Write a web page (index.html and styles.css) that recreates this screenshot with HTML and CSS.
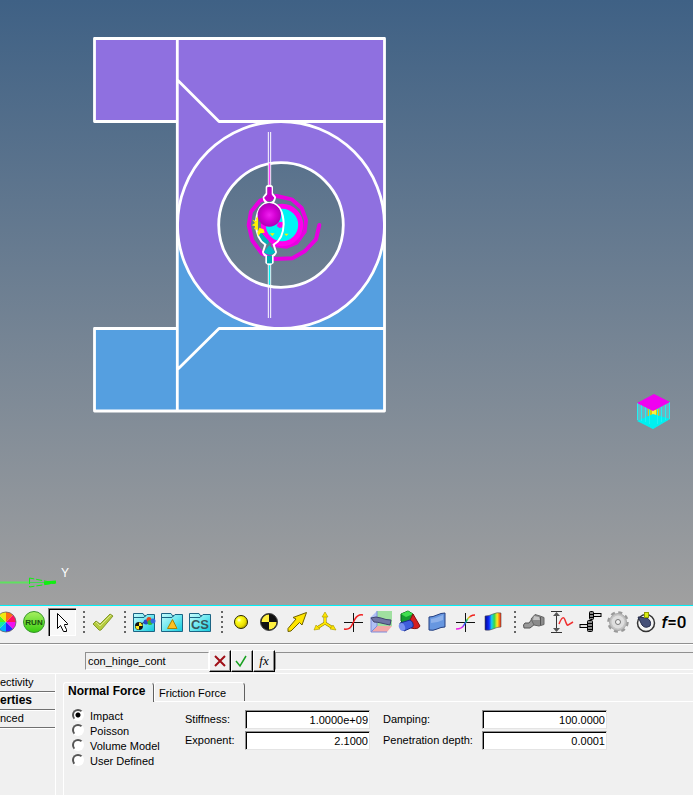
FILE: index.html
```
<!DOCTYPE html>
<html lang="en">
<head>
    <meta charset="UTF-8">
    <meta name="viewport" content="width=device-width, initial-scale=1.0">
    <title>con_hinge_cont</title>
    <link rel="stylesheet" href="styles.css">
</head>
<body>
    <main class="scene">
        <svg class="model" viewBox="0 0 693 605">
            <defs>
                <radialGradient id="ball" cx="50%" cy="50%" r="55%">
                    <stop offset="0" stop-color="#f020f0"/>
                    <stop offset=".5" stop-color="#d400d4"/>
                    <stop offset="1" stop-color="#a800b0"/>
                </radialGradient>
            </defs>
            <!-- hinge halves -->
            <path fill="#8f70e0" d="M94 38H384V225H343A62 62 0 0 0 219 225H177V121H94Z"/>
            <path fill="#559fe0" d="M177 225H219A62 62 0 0 0 343 225H384V411H94V328H177Z"/>
            <path fill="#8f70e0" fill-rule="evenodd" d="M178 225a103 103 0 0 1 206 0a103 103 0 0 1 -206 0ZM219 225a62 62 0 0 0 124 0a62 62 0 0 0 -124 0Z"/>
            <g fill="none" stroke="#fff" stroke-width="2.8" stroke-linejoin="round">
                <path d="M177 121.500H94.500V38.500H384.500V411H94.500V328.500H177M177.300 38V411M177.500 80L219 121.500H384M177.500 369.500L219 328.500H384"/>
                <circle cx="281" cy="225" r="103.500"/>
                <circle cx="281" cy="225" r="62.300"/>
            </g>
            <!-- joint, spring and contact graphics -->
            <g transform="translate(215 120) scale(.33333)">
                <path d="M313 315L303 358L270 393L232 415L180 417L140 400L112 362L101 315L108 275L135 242L185 228L230 238L260 264L273 300L269 335L245 368L215 380L175 375" fill="none" stroke="#e800e0" stroke-width="12" stroke-linecap="round" stroke-linejoin="round"/>
                <circle cx="201" cy="315" r="56" fill="#00f4f4" stroke="#f0e" stroke-width="15"/>
                <path d="M160 36V200M167 36V200M160 430V594M167 430V594" stroke="#fff" stroke-width="3"/>
                <path d="M163.500 130V200" stroke="#ff40ff" stroke-width="4"/>
                <path d="M163.500 430V494" stroke="#00f0f0" stroke-width="4"/>
                <path d="M165 340h14l-7 8ZM208 341h13l-7 7Z" fill="#fff200"/>
                <path d="M190 307l15-2 3 16-15 3-8-6Z" fill="#f0e"/>
                <path d="M125 335Q132 362 158 374L162 364L140 340Z" fill="#00b4b8"/>
                <path d="M155 202q0-5 8-5t8 5V220L180 232Q178 246 170 248Q205 258 206 312Q205 358 176 374L183 396Q181 404 173 408V428Q163 438 154 428V408Q145 404 144 396L151 374Q124 358 123 312Q124 258 156 248Q147 244 146 232L155 220Z" fill="none" stroke="#fff" stroke-width="6"/>
                <path d="M157 202h13v22l8 10q-14 20-31 0l10-10Z" fill="#c400c8"/>
                <path d="M163 376L181 397Q164 413 146 397Z" fill="#00c0c4"/>
                <path d="M156 407h15v23h-15Z" fill="#00acb0"/>
                <path d="M129 292V330L117 327L121 319L110 316L120 309L112 299L124 303L123 293ZM133 323L146 328L149 338L136 340L130 349L127 338Z" fill="#fff200"/>
                <circle cx="163" cy="285" r="35" fill="url(#ball)"/>
            </g>
            <!-- Y axis of the global triad -->
            <path d="M0 582.500H30" stroke="#60e060" stroke-width="2"/>
            <path d="M30 582.500H54" stroke="#40d850" stroke-width="1"/>
            <path d="M29.500 578V587L55 583Z" fill="none" stroke="#10f010" stroke-dasharray="6 2"/>
            <path d="M44 583L56 582" stroke="#10f010" stroke-width="3"/>
            <text class="axis" x="61" y="577">Y</text>
            <!-- bushing cube -->
            <path d="M637 403V420L653 429L670 419V402" fill="#6fb4bf"/>
            <path d="M648 409H659V416L654 419L648 416Z" fill="#d8cc10"/>
            <path d="M652 410H656V417H652Z" fill="#fff040"/>
            <path d="M637 421L653 414L670 419L653 429Z" fill="#00f0f0"/>
            <path d="M637.500 403V420M641.500 404V421M645.500 406V422M649.500 408V424M657.500 409V424M661.500 407V422M665.500 405V420M669.500 402V419" stroke="#20f0f4"/>
            <path d="M637 403L654 394L670 402L653 411Z" fill="#f000f0"/>
        </svg>
    </main>

    <nav class="toolbar">
        <button title="Color"><svg viewBox="0 0 28 28"><g transform="translate(14 14)">
            <path fill="#ff6a10" d="M0 0V-10A10 10 0 0 1 7-7Z"/><path fill="#ff1060" d="M0 0L7-7A10 10 0 0 1 10 0Z"/><path fill="#f010f0" d="M0 0H10A10 10 0 0 1 7 7Z"/><path fill="#3020ff" d="M0 0L7 7A10 10 0 0 1 0 10Z"/><path fill="#00b0ff" d="M0 0V10A10 10 0 0 1-7 7Z"/><path fill="#10f0a0" d="M0 0L-7 7A10 10 0 0 1-10 0Z"/><path fill="#50f020" d="M0 0H-10A10 10 0 0 1-7-7Z"/><path fill="#f0e810" d="M0 0L-7-7A10 10 0 0 1 0-10Z"/><circle r="10" fill="none" stroke="#555" stroke-width=".7"/></g></svg></button>
        <button title="Run"><svg viewBox="0 0 28 28"><defs><linearGradient id="run" x2="0" y2="1"><stop stop-color="#a8f060"/><stop offset="1" stop-color="#38cc10"/></linearGradient></defs><circle cx="14" cy="14" r="10.500" fill="url(#run)" stroke="#38962c"/><text class="run" x="14" y="17">RUN</text></svg></button>
        <button class="pressed" title="Select"><svg viewBox="0 0 28 28"><path d="M9.500 5.500V20.500L12.500 17.500L15.500 23.500H18.500V21.500L16.500 17.500V16.500H19.500V15.500Z" fill="#fff" stroke="#000"/></svg></button>
        <span class="grip"></span>
        <button title="Check"><svg viewBox="0 0 28 28"><path d="M4 16L7 13L11 16L21 6L24 8L12 22Q10 23 9 21Z" fill="#b5cc3f" stroke="#84992c" stroke-linejoin="round"/><path d="M7 14L11 18L22 7" fill="none" stroke="#dbe58c"/></svg></button>
        <span class="grip"></span>
        <button title="Bodies"><svg viewBox="0 0 28 28"><defs><linearGradient id="folder" x2="1" y2="1"><stop stop-color="#c8fcfc"/><stop offset=".5" stop-color="#70e8f0"/><stop offset="1" stop-color="#10c8dc"/></linearGradient></defs><path d="M3.500 23.500V5.500H13L15 8.500L17 6.500H24.500V23.500Z" fill="url(#folder)" stroke="#1c6484"/><path d="M4 9.500H14L16 7" fill="none" stroke="#1c6484"/><circle cx="9" cy="18" r="4" fill="#111"/><path d="M9 18V14.500A3.500 3.500 0 0 1 12.500 18ZM9 18V21.500A3.500 3.500 0 0 1 5.500 18Z" fill="#ffed20"/><path d="M11 16L15 14" stroke="#222"/><circle cx="16" cy="14" r="2.500" fill="#2448cc"/><circle cx="19" cy="11.500" r="2.500" fill="#e34820"/><circle cx="20" cy="14.500" r="2.500" fill="#35b52d"/><circle cx="23" cy="13" r="2.500" fill="#3468e0"/></svg></button>
        <button title="Graphics"><svg viewBox="0 0 28 28"><path d="M3.500 23.500V5.500H13L15 8.500L17 6.500H24.500V23.500Z" fill="url(#folder)" stroke="#1c6484"/><path d="M4 9.500H14L16 7" fill="none" stroke="#1c6484"/><path d="M14.500 11.500L19 20.500H9.500Z" fill="#ffc020" stroke="#a88400"/></svg></button>
        <button title="Control states"><svg viewBox="0 0 28 28"><path d="M3.500 23.500V5.500H13L15 8.500L17 6.500H24.500V23.500Z" fill="url(#folder)" stroke="#1c6484"/><path d="M4 9.500H14L16 7" fill="none" stroke="#1c6484"/><text class="cs" x="14" y="21">CS</text></svg></button>
        <span class="grip"></span>
        <button title="Points"><svg viewBox="0 0 28 28"><defs><radialGradient id="point" cx=".35" cy=".35" r=".7"><stop stop-color="#fff"/><stop offset=".25" stop-color="#ffff20"/><stop offset=".7" stop-color="#ece000"/><stop offset="1" stop-color="#a89b00"/></radialGradient></defs><circle cx="14" cy="14" r="6.500" fill="url(#point)" stroke="#2a2600"/></svg></button>
        <button title="Body"><svg viewBox="0 0 28 28"><circle cx="14" cy="14" r="8.500" fill="#111" stroke="#444"/><path d="M14 14V6.500A7.500 7.500 0 0 0 6.500 14Z" fill="#fff040"/><path d="M14 14V21.500A7.500 7.500 0 0 0 21.500 14Z" fill="#fff040"/></svg></button>
        <button title="Vectors"><svg viewBox="0 0 28 28"><path d="M23.500 4.500L19 17L16.500 14.500L8 23L5 23.500L5 20.500L13 11L10 9.500Z" fill="#ffe500" stroke="#6e6000" stroke-linejoin="round"/></svg></button>
        <button title="Markers"><svg viewBox="0 0 28 28"><g stroke="#8e8000" stroke-width="3" fill="none"><path d="M14 7V15L6 20M14 15L22 20"/></g><g stroke="#ffe500" stroke-width="2" fill="none"><path d="M14 7V15L6 20M14 15L22 20"/></g><path d="M14 4L17 9H11ZM3 22L5 17L9 21ZM25 22L19 21L22 17Z" fill="#ffe500" stroke="#a69700" stroke-width=".6"/></svg></button>
        <button title="Curves"><svg viewBox="0 0 28 28"><path d="M5 14.500H24M14.500 5V24" stroke="#111"/><path d="M5 21Q11 22 13 17L16 11Q19 6 24 7" fill="none" stroke="#f02020" stroke-width="1.500"/></svg></button>
        <button title="Surfaces"><svg viewBox="0 0 28 28"><path d="M4 9L10 3V18L4 24Z" fill="#b0c0f4"/><path d="M10 3H25V18H10Z" fill="#a0e0a0"/><path d="M4 24L10 18H25L20 24Z" fill="#f4a8a8"/><path d="M4 9V24L10 18V3M4 24H20" fill="none" stroke="#7c8cdc"/><path d="M4 10Q9 8 14 10T24 12L23 17Q18 16 14 15T7 14Z" fill="#7075a5" stroke="#40456f"/></svg></button>
        <button title="Solids"><svg viewBox="0 0 28 28"><path d="M6 6L13 3L18 6V14L10 17L6 13Z" fill="#149c30" stroke="#086118"/><path d="M6 6L13 3L18 6L11 9Z" fill="#40df50"/><path d="M18 6L25 18Q23 22 16 20L13 16Z" fill="#d51e1e" stroke="#861010"/><path d="M5 15L15 12Q19 14 18 19L9 23Q4 20 5 15Z" fill="#405edc" stroke="#182d8c"/><ellipse cx="7" cy="19" rx="3" ry="4" fill="#7890f0" transform="rotate(-22 7 19)"/></svg></button>
        <button title="Deformable surface"><svg viewBox="0 0 28 28"><path d="M6 9Q10 9 14 7T22 5V19Q18 19 14 21T6 22Z" fill="#6797e0" stroke="#243f80"/><path d="M8 11Q14 10 20 7V12Q14 15 8 15Z" fill="#8db1ea"/></svg></button>
        <button title="Curve set"><svg viewBox="0 0 28 28"><defs><linearGradient id="rain" gradientUnits="userSpaceOnUse" x1="5" y1="21" x2="24" y2="7"><stop offset=".2" stop-color="#f020e8"/><stop offset=".42" stop-color="#3050ff"/><stop offset=".6" stop-color="#20d060"/><stop offset=".7" stop-color="#e8cd20"/><stop offset=".85" stop-color="#f02020"/></linearGradient></defs><path d="M5 14.500H24M14.500 5V24" stroke="#111"/><path d="M5 21Q11 21 13 17L16 12Q19 7 24 7" fill="none" stroke="url(#rain)" stroke-width="1.500"/></svg></button>
        <button title="Contour"><svg viewBox="0 0 28 28"><defs><linearGradient id="contour"><stop stop-color="#000890"/><stop offset=".25" stop-color="#1028ff"/><stop offset=".42" stop-color="#18cef0"/><stop offset=".58" stop-color="#30d850"/><stop offset=".76" stop-color="#ffeb20"/><stop offset="1" stop-color="#f02010"/></linearGradient></defs><path d="M6 8Q10 8 14 6T22 5V19Q18 19 14 21T6 22Z" fill="url(#contour)" stroke="#535050" stroke-width=".6"/></svg></button>
        <span class="grip"></span>
        <button title="Joints"><svg viewBox="0 0 28 28"><path d="M3.500 17L5 15H9L12 11L15 16L10 20H4Z" fill="#999" stroke="#555"/><path d="M11 11L15 6.500L20 8L24 9.500V16.500L19 18L14 17Z" fill="#8b8b8b" stroke="#666"/><path d="M14 8L19 9L20 12L13 12Z" fill="#c4c4c4"/><path d="M20.500 9V17" stroke="#555"/></svg></button>
        <button title="Spring dampers"><svg viewBox="0 0 28 28"><path d="M3 3.500H14M3 24.500H14M8.500 5V23" stroke="#333" fill="none"/><path d="M8.500 4L12 8H5ZM8.500 24L12 20H5Z" fill="#555"/><path d="M11 16Q15 6 17 12T20 17L25 14" fill="none" stroke="#f03030" stroke-width="1.500"/></svg></button>
        <button title="Couplers"><svg viewBox="0 0 28 28"><rect x="17" y="5.500" width="8" height="3" fill="#ddd" stroke="#000"/><rect x="4" y="16.500" width="8" height="3" fill="#ddd" stroke="#000"/><rect x="13.500" y="3.500" width="4" height="8" rx="1" fill="#888" stroke="#000"/><rect x="11.500" y="12.500" width="5" height="11" rx="1" fill="#888" stroke="#000"/><path d="M13 6.500H18M13 9.500H18M11 15.500H17M11 18.500H17M11 21.500H17" stroke="#000"/></svg></button>
        <button title="Gears"><svg viewBox="0 0 28 28"><circle cx="14" cy="14" r="9.500" fill="none" stroke="#999" stroke-width="2.500" stroke-dasharray="4 3.460"/><circle cx="14" cy="14" r="8.500" fill="#c4c4c4" stroke="#aaa"/><circle cx="14" cy="14" r="6.500" fill="#dedede"/><circle cx="14" cy="14" r="2.500" fill="#f0f0f0" stroke="#777"/></svg></button>
        <button title="Motions"><svg viewBox="0 0 28 28"><circle cx="14" cy="15" r="8.500" fill="#f4f4f4" stroke="#333" stroke-width="1.500"/><path d="M6 9L15 10Q20 13 18 18Q13 21 10 17Z" fill="#455078" stroke="#252c4c"/><rect x="12.500" y="4.500" width="4" height="5" fill="#d9ed13" stroke="#929d00"/></svg></button>
        <button title="General constraint"><svg viewBox="0 0 28 28"><text class="eq" x="14" y="20"><tspan font-style="italic">f</tspan>=0</text></svg></button>
    </nav>

    <form class="editor">
        <div class="name-row">
            <input class="name" type="text" value="con_hinge_cont" aria-label="Name">
            <button type="button" title="Cancel"><svg viewBox="0 0 20 20"><path d="M5 5L15 15M15 5L5 15" stroke="#a01018" stroke-width="2"/></svg></button>
            <button type="button" title="Accept"><svg viewBox="0 0 20 20"><path d="M4 10L8 15L14 5" fill="none" stroke="#18a020" stroke-width="1.500"/></svg></button>
            <button type="button" title="Expression"><svg viewBox="0 0 20 20"><text class="fx" x="10" y="14">fx</text></svg></button>
            <input class="formula" type="text" aria-label="Expression">
        </div>

        <div class="panel">
            <div class="side">
                <button type="button">ectivity</button>
                <button type="button" class="active">erties</button>
                <button type="button">nced</button>
            </div>
            <div class="content">
                <div class="tabs">
                    <button type="button" class="active">Normal Force</button>
                    <button type="button">Friction Force</button>
                </div>
                <div class="page">
                    <div class="models">
                        <label><input type="radio" name="model" checked>Impact</label>
                        <label><input type="radio" name="model">Poisson</label>
                        <label><input type="radio" name="model">Volume Model</label>
                        <label><input type="radio" name="model">User Defined</label>
                    </div>
                    <div class="fields">
                        <label for="stiffness">Stiffness:</label>
                        <input type="text" id="stiffness" value="1.0000e+09">
                        <label for="damping">Damping:</label>
                        <input type="text" id="damping" value="100.0000">
                        <label for="exponent">Exponent:</label>
                        <input type="text" id="exponent" value="2.1000">
                        <label for="depth">Penetration depth:</label>
                        <input type="text" id="depth" value="0.0001">
                    </div>
                </div>
            </div>
        </div>
    </form>
</body>
</html>
```
FILE: styles.css
```
* {
    box-sizing: border-box;
}
body {
    margin: 0;
    min-height: 100vh;
    display: flex;
    flex-direction: column;
    overflow-x: hidden;
    background: #f0f0f0;
    color: #000;
    font: 11px/15px "Liberation Sans", Arial, sans-serif;
}
button, input {
    margin: 0;
    padding: 0;
    border: 0;
    background: none;
    color: inherit;
    font: inherit;
}
.scene {
    flex: 1;
    display: flex;
    background: linear-gradient(#3f6185, #a0a0a0);
}
.model {
    width: 100%;
}
.axis {
    font: 12px "Liberation Sans", sans-serif;
    fill: #fff;
}

/* toolbar */
.toolbar {
    display: flex;
    height: 40px;
    padding-top: 2px;
    border-top: 1px solid #00f0f8;
    border-bottom: 1px solid #fff;
    box-shadow: inset 0 -1px #909090;
    overflow: hidden;
}
.toolbar button {
    flex: none;
    width: 28px;
    height: 28px;
}
.toolbar button:first-child {
    margin-left: -8px;
}
.toolbar svg {
    display: block;
    width: 28px;
    height: 28px;
}
.toolbar .pressed {
    background: #f8f8f8;
    box-shadow: inset 1px 1px #808080, inset 2px 2px #000, inset -1px -1px #fff;
}
.grip {
    flex: none;
    width: 2px;
    height: 23px;
    margin: 3px 4px 0 7px;
    background: repeating-linear-gradient(#666 0 2px, transparent 2px 5px);
}
.run {
    font: bold 8px "Liberation Sans", sans-serif;
    fill: #17500e;
    text-anchor: middle;
}
.cs {
    font: bold 13px "Liberation Sans", sans-serif;
    fill: #37565c;
    text-anchor: middle;
}
.eq {
    font: 500 17px Roboto, sans-serif;
    text-anchor: middle;
}
.fx {
    font: italic 13px "Liberation Serif", serif;
    text-anchor: middle;
}

/* name row */
.name-row {
    display: flex;
    height: 28px;
    padding: 5px 0 0 85px;
}
.name, .formula {
    height: 18px;
    margin-top: 2px;
    padding: 0 2px;
    border: 1px solid #fff;
    border-top-color: #909090;
    border-left-color: #909090;
}
.name {
    width: 124px;
}
.formula {
    flex: 1;
    min-width: 0;
    border-right: 0;
}
.name-row button {
    width: 22px;
    height: 22px;
    border: 1px solid #000;
    border-top-color: #fff;
    border-left-color: #fff;
    box-shadow: inset -1px -1px #909090;
}
.name-row svg {
    display: block;
    width: 20px;
    height: 20px;
}

/* property panel */
.panel {
    display: flex;
    min-height: 122px;
    border-top: 1px solid #fff;
}
.side {
    width: 56px;
    border-right: 1px solid #fff;
}
.side button {
    display: block;
    width: 55px;
    height: 18px;
    border-bottom: 1px solid #707070;
    box-shadow: 0 1px #fff;
    text-align: left;
}
.side .active, .tabs .active {
    font: bold 12px/15px "Liberation Sans", sans-serif;
}
.content {
    flex: 1;
    display: flex;
    flex-direction: column;
    padding: 8px 0 0 7px;
}
.tabs {
    display: flex;
    height: 20px;
    background: linear-gradient(#fff, #fff) 92px 19px no-repeat;
}
.tabs button {
    width: 91px;
    height: 19px;
    padding: 2px 0 0 4px;
    border-top: 1px solid #fff;
    border-left: 1px solid #fff;
    border-right: 1px solid #606060;
    border-radius: 3px 4px 0 0;
    text-align: left;
}
.tabs .active {
    height: 20px;
    padding-top: 0;
    padding-bottom: 2px;
}
.page {
    flex: 1;
    display: flex;
    padding: 7px 0 0 8px;
    border-left: 1px solid #fff;
}
.models {
    width: 113px;
}
.models label {
    display: flex;
    height: 15px;
}
.models input {
    appearance: none;
    width: 12px;
    height: 12px;
    margin-right: 6px;
    border: 2px solid #fff;
    border-top-color: #555;
    border-left-color: #555;
    border-radius: 50%;
    background: #fff;
}
.models input:checked {
    background: radial-gradient(#000 2px, #fff 3px);
}
.fields {
    display: grid;
    grid-template-columns: 60px 125px 112px 125px;
    grid-template-rows: 19px 19px;
    align-content: start;
    align-items: center;
    gap: 2px 0;
    padding-top: 1px;
}
.fields label:nth-of-type(even) {
    padding-left: 13px;
}
.fields input {
    width: 100%;
    height: 19px;
    padding: 0 1px;
    border: 1px solid #e4e4e4;
    border-top-color: #909090;
    border-left-color: #909090;
    background: #fff;
    box-shadow: inset 1px 1px #000;
    text-align: right;
}
```
